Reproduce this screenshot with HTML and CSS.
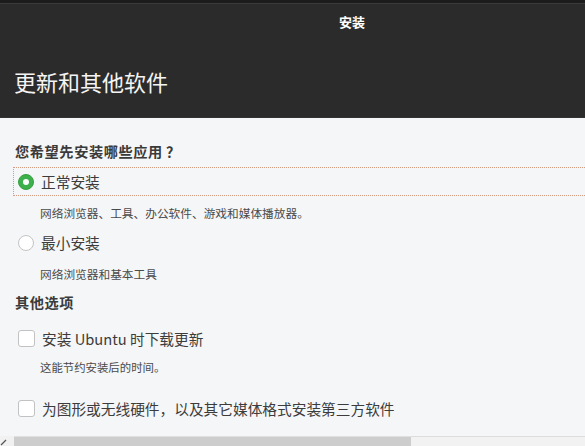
FILE: index.html
```html
<!DOCTYPE html>
<html lang="zh-CN">
<head>
<meta charset="utf-8">
<title>安装</title>
<link rel="stylesheet" href="styles.css">
</head>
<body>
<div class="window">
  <div class="topstrip"></div>
  <header class="titlebar"><span class="wtitle">安装</span></header>
  <div class="pagehead"><h1 class="pagetitle">更新和其他软件</h1></div>
  <main class="content">
    <h2 class="section">您希望先安装哪些应用<span class="qmark">？</span></h2>
    <div class="option focused">
      <span class="radio checked"></span>
      <span class="label">正常安装</span>
    </div>
    <p class="desc d1">网络浏览器、工具、办公软件、游戏和媒体播放器。</p>
    <div class="option o2">
      <span class="radio"></span>
      <span class="label">最小安装</span>
    </div>
    <p class="desc d2">网络浏览器和基本工具</p>
    <h2 class="section s2">其他选项</h2>
    <div class="option c1">
      <span class="check"></span>
      <span class="label">安装 Ubuntu 时下载更新</span>
    </div>
    <p class="desc d3">这能节约安装后的时间。</p>
    <div class="option c2">
      <span class="check"></span>
      <span class="label">为图形或无线硬件，以及其它媒体格式安装第三方软件</span>
    </div>
  </main>
  <div class="hscroll">
    <div class="grip">
      <svg width="8" height="8" viewBox="0 0 8 8"><path d="M1 7 L6 2" stroke="#555" stroke-width="1.3"/></svg>
    </div>
    <div class="thumb"></div>
    <div class="trough"></div>
  </div>
</div>
</body>
</html>
```

FILE: styles.css
```css
html, body {
  margin: 0;
  padding: 0;
}
body {
  width: 585px;
  height: 446px;
  overflow: hidden;
  background: #f5f5f5;
  font-family: "Noto Sans CJK SC", "Noto Sans", sans-serif;
}
.window {
  display: flex;
  flex-direction: column;
  height: 446px;
}
.topstrip {
  height: 3px;
  background: #1c1c1c;
  border-bottom: 1px solid #3a3a3a;
}
.titlebar {
  height: 36px;
  background: #2b2b2b;
  display: flex;
  align-items: center;
  padding-left: 339px;
}
.wtitle {
  color: #ffffff;
  font-weight: bold;
  font-size: 13px;
  line-height: 16px;
}
.pagehead {
  background: #2b2b2b;
  border-bottom: 1px solid #333;
  display: flex;
  align-items: center;
  padding-left: 14px;
  box-sizing: border-box;
  height: 78px;
}
.pagetitle {
  margin: 4px 0 0 0;
  color: #f4f4f4;
  font-weight: normal;
  font-size: 22px;
  line-height: 30px;
}
.content {
  flex: 1;
  background: #f5f6f7;
  padding: 23px 0 0 13px;
  overflow: hidden;
}
.section {
  margin: 0 0 0 2px;
  font-size: 14.2px;
  line-height: 20px;
  font-weight: bold;
  color: #3a3a3a;
  letter-spacing: 0.6px;
}
.qmark {
  margin-left: 3px;
}
.s2 { margin-top: 9px; }
.option {
  display: flex;
  align-items: center;
  height: 27px;
  border: 1px dotted transparent;
  padding: 0 4px;
  margin-top: 6px;
  width: 640px;
}
.option.focused {
  border-color: #d49a82;
}
.o2 { margin-top: 6px; }
.c1 { margin-top: 12px; }
.c2 { margin-top: 18px; }
.radio {
  width: 16px;
  height: 16px;
  box-sizing: border-box;
  border-radius: 50%;
  border: 1px solid #c4c4c4;
  background: #ffffff;
  flex: none;
  display: flex;
  align-items: center;
  justify-content: center;
}
.radio.checked {
  background: #3cb04a;
  border-color: #35a042;
}
.radio.checked::after {
  content: "";
  width: 6px;
  height: 6px;
  border-radius: 50%;
  background: #ffffff;
}
.check {
  width: 17px;
  height: 17px;
  box-sizing: border-box;
  border: 1px solid #c2c2c2;
  border-radius: 3px;
  background: #ffffff;
  flex: none;
}
.label {
  margin-left: 7px;
  font-size: 14.7px;
  line-height: 20px;
  color: #3c3c3c;
}
.desc {
  margin: 8px 0 0 27px;
  font-size: 11.7px;
  line-height: 18px;
  color: #4a4a4a;
}
.d3 {
  margin-top: 5px;
  font-size: 11.4px;
}
.hscroll {
  height: 10px;
  display: flex;
  background: #f1f1f1;
}
.grip {
  width: 14px;
  display: flex;
  align-items: flex-end;
}
.grip svg { display: block; }
.thumb {
  width: 397px;
  box-sizing: border-box;
  background: #cdcdcd;
  border-top: 1px solid #e0e0e0;
}
.trough {
  flex: 1;
  box-sizing: border-box;
  background: #f2f2f2;
  border-top: 1px solid #dcdcdc;
}
```
